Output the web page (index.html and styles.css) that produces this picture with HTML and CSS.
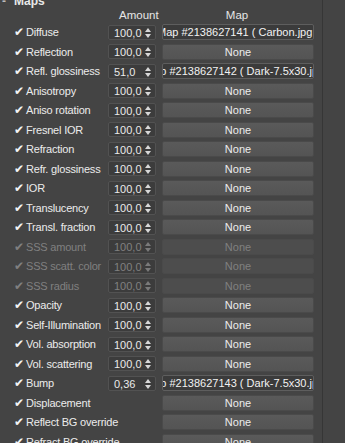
FILE: index.html
```html
<!DOCTYPE html>
<html lang="en">
<head>
    <meta charset="UTF-8">
    <title>Maps</title>
    <link rel="stylesheet" href="styles.css">
</head>
<body>
    <div class="panel">
        <div class="title"><span class="toggle">-</span>Maps</div>
        <div class="head">
            <span></span>
            <span></span>
            <span class="head-amount">Amount</span>
            <span class="head-map">Map</span>
        </div>

        <div class="row"><span class="check">✔</span><span class="label">Diffuse</span><span class="spin">100,0<i class="arrows"></i></span><span class="map map-set"><span>Map #2138627141 ( Carbon.jpg )</span></span></div>
        <div class="row"><span class="check">✔</span><span class="label">Reflection</span><span class="spin">100,0<i class="arrows"></i></span><span class="map"><span>None</span></span></div>
        <div class="row"><span class="check">✔</span><span class="label">Refl. glossiness</span><span class="spin">51,0<i class="arrows"></i></span><span class="map map-set"><span>Map #2138627142 ( Dark-7.5x30.jpg )</span></span></div>
        <div class="row"><span class="check">✔</span><span class="label">Anisotropy</span><span class="spin">100,0<i class="arrows"></i></span><span class="map"><span>None</span></span></div>
        <div class="row"><span class="check">✔</span><span class="label">Aniso rotation</span><span class="spin">100,0<i class="arrows"></i></span><span class="map"><span>None</span></span></div>
        <div class="row"><span class="check">✔</span><span class="label">Fresnel IOR</span><span class="spin">100,0<i class="arrows"></i></span><span class="map"><span>None</span></span></div>
        <div class="row"><span class="check">✔</span><span class="label">Refraction</span><span class="spin">100,0<i class="arrows"></i></span><span class="map"><span>None</span></span></div>
        <div class="row"><span class="check">✔</span><span class="label">Refr. glossiness</span><span class="spin">100,0<i class="arrows"></i></span><span class="map"><span>None</span></span></div>
        <div class="row"><span class="check">✔</span><span class="label">IOR</span><span class="spin">100,0<i class="arrows"></i></span><span class="map"><span>None</span></span></div>
        <div class="row"><span class="check">✔</span><span class="label">Translucency</span><span class="spin">100,0<i class="arrows"></i></span><span class="map"><span>None</span></span></div>
        <div class="row"><span class="check">✔</span><span class="label">Transl. fraction</span><span class="spin">100,0<i class="arrows"></i></span><span class="map"><span>None</span></span></div>
        <div class="row off"><span class="check">✔</span><span class="label">SSS amount</span><span class="spin">100,0<i class="arrows"></i></span><span class="map"><span>None</span></span></div>
        <div class="row off"><span class="check">✔</span><span class="label">SSS scatt. color</span><span class="spin">100,0<i class="arrows"></i></span><span class="map"><span>None</span></span></div>
        <div class="row off"><span class="check">✔</span><span class="label">SSS radius</span><span class="spin">100,0<i class="arrows"></i></span><span class="map"><span>None</span></span></div>
        <div class="row"><span class="check">✔</span><span class="label">Opacity</span><span class="spin">100,0<i class="arrows"></i></span><span class="map"><span>None</span></span></div>
        <div class="row"><span class="check">✔</span><span class="label">Self-Illumination</span><span class="spin">100,0<i class="arrows"></i></span><span class="map"><span>None</span></span></div>
        <div class="row"><span class="check">✔</span><span class="label">Vol. absorption</span><span class="spin">100,0<i class="arrows"></i></span><span class="map"><span>None</span></span></div>
        <div class="row"><span class="check">✔</span><span class="label">Vol. scattering</span><span class="spin">100,0<i class="arrows"></i></span><span class="map"><span>None</span></span></div>
        <div class="row"><span class="check">✔</span><span class="label">Bump</span><span class="spin">0,36<i class="arrows"></i></span><span class="map map-set"><span>Map #2138627143 ( Dark-7.5x30.jpg )</span></span></div>
        <div class="row"><span class="check">✔</span><span class="label">Displacement</span><span class="blank"></span><span class="map"><span>None</span></span></div>
        <div class="row"><span class="check">✔</span><span class="label">Reflect BG override</span><span class="blank"></span><span class="map"><span>None</span></span></div>
        <div class="row"><span class="check">✔</span><span class="label">Refract BG override</span><span class="blank"></span><span class="map"><span>None</span></span></div>
    </div>
</body>
</html>
```
FILE: styles.css
```css
body {
    margin: 0;
    background: #444444;
    color: #e2e2e2;
    font-family: 'Liberation Sans', Arial, sans-serif;
    font-size: 11px;
    overflow: hidden;
}
.panel {
    width: 322px;
    height: 443px;
    border-right: 1px solid #363636;
    overflow: hidden;
}
.title {
    margin-top: -6px;
    height: 15px;
    line-height: 15px;
    padding-left: 14px;
    font-weight: bold;
    font-size: 12px;
    color: #e8e8e8;
    position: relative;
}
.toggle {
    position: absolute;
    left: 2px;
    top: 0;
    color: #bbb;
}
.head,
.row {
    display: grid;
    grid-template-columns: 13px 82px 48px 158px;
    padding-left: 13px;
    align-items: center;
}
.head {
    height: 13.5px;
    line-height: 13.5px;
    font-size: 11.5px;
    color: #e6e6e6;
}
.head-amount {
    text-align: center;
    padding-left: 11px;
}
.head-map {
    text-align: center;
    margin-left: 6px;
    padding-right: 2px;
}
.row {
    height: 19.5px;
}
.check {
    font-size: 12px;
    color: #f4f4f4;
    line-height: 1;
    padding-left: 1px;
}
.label {
    white-space: nowrap;
    letter-spacing: -0.2px;
    color: #ececec;
}
.spin {
    position: relative;
    height: 15px;
    line-height: 14px;
    box-sizing: border-box;
    background: #3c3c3c;
    border: 1px solid #525252;
    border-radius: 2px;
    padding-left: 5px;
    color: #eaeaea;
}
.arrows {
    position: absolute;
    right: 4px;
    top: 2px;
    width: 0;
    height: 0;
    border-left: 3px solid transparent;
    border-right: 3px solid transparent;
    border-bottom: 4px solid #d8d8d8;
}
.arrows::after {
    content: "";
    position: absolute;
    left: -3px;
    top: 6px;
    border-left: 3px solid transparent;
    border-right: 3px solid transparent;
    border-top: 4px solid #d8d8d8;
}
.map {
    margin-left: 6px;
    height: 16px;
    box-sizing: border-box;
    display: flex;
    justify-content: center;
    align-items: center;
    overflow: hidden;
    white-space: nowrap;
    background: linear-gradient(#5a5a5a, #545454);
    border: 1px solid #4a4a4a;
    border-radius: 2px;
    color: #ececec;
}
.map span {
    flex-shrink: 0;
}
.map-set {
    background: #3b3b3b;
    border-color: #5e5e5e;
    color: #f2f2f2;
}
.off .check,
.off .label,
.off .spin,
.off .map {
    color: #808080;
}
.off .arrows {
    border-bottom-color: #7a7a7a;
}
.off .arrows::after {
    border-top-color: #7a7a7a;
}
.off .map {
    background: #4d4d4d;
}
```
